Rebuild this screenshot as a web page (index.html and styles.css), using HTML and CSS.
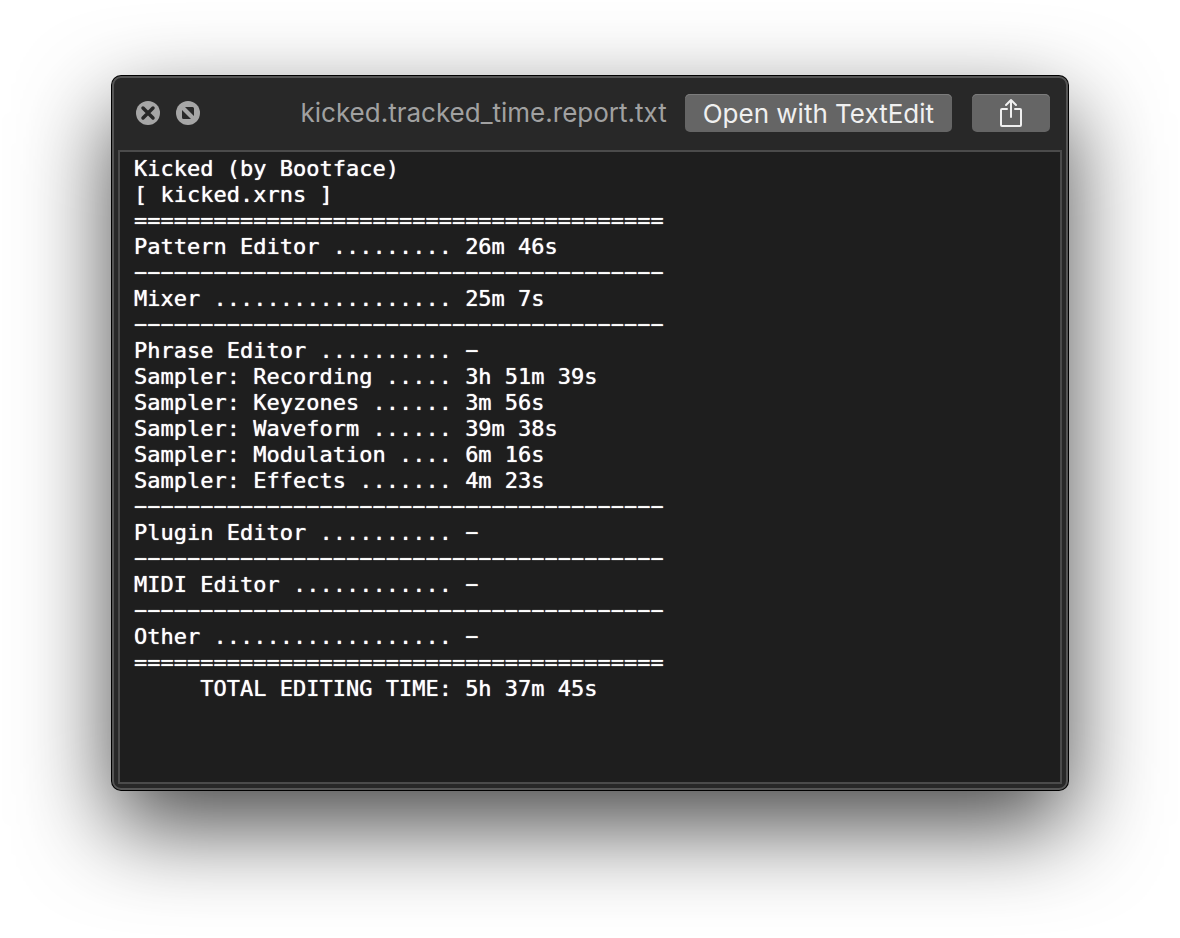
FILE: index.html
```html
<!DOCTYPE html>
<html lang="en">

<head>
    <meta charset="UTF-8">
    <meta name="viewport" content="width=device-width, initial-scale=1.0">
    <title>kicked.tracked_time.report.txt</title>
    <link rel="stylesheet" href="styles.css">
</head>

<body>
    <main class="window">
        <header class="toolbar">
            <button type="button" class="round-button" aria-label="Close">
                <svg width="24" height="24" viewBox="0 0 24 24">
                    <circle cx="12" cy="12" r="12" fill="#a6a6a6" />
                    <path d="M7 7l10 10M17 7L7 17" stroke="#282828" stroke-width="3.500" stroke-linecap="round" />
                </svg>
            </button>
            <button type="button" class="round-button" aria-label="Full screen">
                <svg width="24" height="24" viewBox="0 0 24 24">
                    <circle cx="12" cy="12" r="12" fill="#a6a6a6" />
                    <path d="M9 6h7.500a1.500 1.500 0 0 1 1.500 1.500V15zM6 9v7.500a1.500 1.500 0 0 0 1.500 1.500H15z" fill="#282828" />
                </svg>
            </button>
            <h1 class="title">kicked.tracked_time.report.txt</h1>
            <button type="button" class="button">Open with TextEdit</button>
            <button type="button" class="button share" aria-label="Share">
                <svg width="24" height="30" viewBox="0 0 24 30" fill="none" stroke="#f0f0f0" stroke-width="2" stroke-linecap="round" stroke-linejoin="round">
                    <path d="M8 11H3q-1 0-1 1v15q0 1 1 1h18q1 0 1-1V12q0-1-1-1h-5" />
                    <path d="M12 19V2M7 7l5-5 5 5" />
                </svg>
            </button>
        </header>
        <pre class="report">
Kicked (by Bootface)
[ kicked.xrns ]
========================================
Pattern Editor ......... 26m 46s
−−−−−−−−−−−−−−−−−−−−−−−−−−−−−−−−−−−−−−−−
Mixer .................. 25m 7s
−−−−−−−−−−−−−−−−−−−−−−−−−−−−−−−−−−−−−−−−
Phrase Editor .......... −
Sampler: Recording ..... 3h 51m 39s
Sampler: Keyzones ...... 3m 56s
Sampler: Waveform ...... 39m 38s
Sampler: Modulation .... 6m 16s
Sampler: Effects ....... 4m 23s
−−−−−−−−−−−−−−−−−−−−−−−−−−−−−−−−−−−−−−−−
Plugin Editor .......... −
−−−−−−−−−−−−−−−−−−−−−−−−−−−−−−−−−−−−−−−−
MIDI Editor ............ −
−−−−−−−−−−−−−−−−−−−−−−−−−−−−−−−−−−−−−−−−
Other .................. −
========================================
     TOTAL EDITING TIME: 5h 37m 45s
</pre>
    </main>
</body>

</html>
```

FILE: styles.css
```css
* {
    box-sizing: border-box;
}

body {
    display: flex;
    min-height: 100vh;
    margin: 0;
    padding: 76px 112px 148px;
    background: #fff;
    font-family: Inter, "Liberation Sans", sans-serif;
}

.window {
    flex: 1;
    display: flex;
    flex-direction: column;
    min-width: 0;
    padding: 0 4px 4px;
    background: #282828;
    border: 2px solid #555;
    border-radius: 9px;
    box-shadow: 0 0 0 1px #000, 0 36px 92px rgba(0, 0, 0, 0.72);
}

.toolbar {
    display: flex;
    align-items: center;
    height: 72px;
    padding: 0 12px 2px 18px;
}

.round-button {
    display: flex;
    margin-right: 16px;
    padding: 0;
    background: none;
    border: none;
    border-radius: 50%;
    cursor: pointer;
}

.title {
    flex: 1;
    margin: 0 18px 0 0;
    color: #a1a1a1;
    font-size: 26px;
    font-weight: 400;
    line-height: 38px;
    text-align: right;
    white-space: nowrap;
}

.button {
    display: flex;
    align-items: center;
    justify-content: center;
    height: 38px;
    padding: 0 18px;
    background: #656565;
    border: none;
    border-radius: 5px;
    box-shadow: inset 0 1px #7c7c7c;
    color: #f0f0f0;
    font-family: inherit;
    font-size: 26px;
    white-space: nowrap;
    cursor: pointer;
}

.share {
    width: 78px;
    margin-left: 20px;
}

.report {
    flex: 1;
    margin: 0;
    padding: 4px 14px;
    overflow: auto;
    background: #1e1e1e;
    border: 2px solid #4b4b4b;
    color: #fff;
    font-family: "DejaVu Sans Mono", monospace;
    font-size: 22px;
    line-height: 26px;
    text-shadow: 0 0 1px #fff;
}
```
